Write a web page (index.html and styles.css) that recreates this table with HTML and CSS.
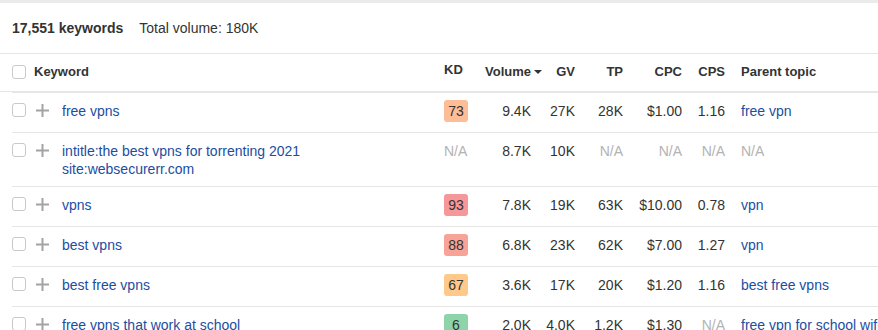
FILE: index.html
```html
<!DOCTYPE html>
<html lang="en">
<head>
<meta charset="utf-8">
<title>Keywords</title>
<link rel="stylesheet" href="styles.css">
</head>
<body>
<div class="topbar"></div>
<div class="summary">
  <span class="count">17,551 keywords</span>
  <span class="total">Total volume: 180K</span>
</div>
<div class="table">
  <div class="row head">
    <div class="kw"><span class="cb"></span><span class="hlabel">Keyword</span></div>
    <div class="kd">KD</div>
    <div class="num sort">Volume<span class="arrow"></span></div>
    <div class="num">GV</div>
    <div class="num">TP</div>
    <div class="num">CPC</div>
    <div class="num">CPS</div>
    <div class="parent">Parent topic</div>
  </div>

  <div class="row">
    <div class="kw"><span class="cb"></span><svg class="plus" viewBox="0 0 13 13"><rect x="0" y="5.5" width="13" height="2"/><rect x="5.5" y="0" width="2" height="13"/></svg><a class="kwtext">free vpns</a></div>
    <div class="kd"><span class="badge kd73">73</span></div>
    <div class="num">9.4K</div>
    <div class="num">27K</div>
    <div class="num">28K</div>
    <div class="num">$1.00</div>
    <div class="num">1.16</div>
    <div class="parent"><a>free vpn</a></div>
  </div>

  <div class="row">
    <div class="kw"><span class="cb"></span><svg class="plus" viewBox="0 0 13 13"><rect x="0" y="5.5" width="13" height="2"/><rect x="5.5" y="0" width="2" height="13"/></svg><a class="kwtext">intitle:the best vpns for torrenting 2021 site:websecurerr.com</a></div>
    <div class="kd na">N/A</div>
    <div class="num">8.7K</div>
    <div class="num">10K</div>
    <div class="num na">N/A</div>
    <div class="num na">N/A</div>
    <div class="num na">N/A</div>
    <div class="parent na">N/A</div>
  </div>

  <div class="row">
    <div class="kw"><span class="cb"></span><svg class="plus" viewBox="0 0 13 13"><rect x="0" y="5.5" width="13" height="2"/><rect x="5.5" y="0" width="2" height="13"/></svg><a class="kwtext">vpns</a></div>
    <div class="kd"><span class="badge kd93">93</span></div>
    <div class="num">7.8K</div>
    <div class="num">19K</div>
    <div class="num">63K</div>
    <div class="num">$10.00</div>
    <div class="num">0.78</div>
    <div class="parent"><a>vpn</a></div>
  </div>

  <div class="row">
    <div class="kw"><span class="cb"></span><svg class="plus" viewBox="0 0 13 13"><rect x="0" y="5.5" width="13" height="2"/><rect x="5.5" y="0" width="2" height="13"/></svg><a class="kwtext">best vpns</a></div>
    <div class="kd"><span class="badge kd88">88</span></div>
    <div class="num">6.8K</div>
    <div class="num">23K</div>
    <div class="num">62K</div>
    <div class="num">$7.00</div>
    <div class="num">1.27</div>
    <div class="parent"><a>vpn</a></div>
  </div>

  <div class="row">
    <div class="kw"><span class="cb"></span><svg class="plus" viewBox="0 0 13 13"><rect x="0" y="5.5" width="13" height="2"/><rect x="5.5" y="0" width="2" height="13"/></svg><a class="kwtext">best free vpns</a></div>
    <div class="kd"><span class="badge kd67">67</span></div>
    <div class="num">3.6K</div>
    <div class="num">17K</div>
    <div class="num">20K</div>
    <div class="num">$1.20</div>
    <div class="num">1.16</div>
    <div class="parent"><a>best free vpns</a></div>
  </div>

  <div class="row">
    <div class="kw"><span class="cb"></span><svg class="plus" viewBox="0 0 13 13"><rect x="0" y="5.5" width="13" height="2"/><rect x="5.5" y="0" width="2" height="13"/></svg><a class="kwtext">free vpns that work at school</a></div>
    <div class="kd"><span class="badge kd6">6</span></div>
    <div class="num">2.0K</div>
    <div class="num">4.0K</div>
    <div class="num">1.2K</div>
    <div class="num">$1.30</div>
    <div class="num na">N/A</div>
    <div class="parent"><a>free vpn for school wifi</a></div>
  </div>
</div>
</body>
</html>
```

FILE: styles.css
```css
html, body {
  margin: 0;
  padding: 0;
  overflow: hidden;
  background: #fff;
}
body {
  width: 878px;
  font-family: "Liberation Sans", Arial, sans-serif;
  font-size: 14px;
  line-height: 18px;
  color: #333;
}
.topbar {
  height: 3px;
  background: #ebebeb;
}
.summary {
  display: flex;
  gap: 16px;
  padding: 16px 12px;
  border-bottom: 1px solid #e6e6e6;
}
.count {
  font-weight: bold;
}
.row {
  display: grid;
  grid-template-columns: 432px 26px 61px 44px 48px 59px 43px 1fr;
  align-items: start;
  border-top: 1px solid #e6e6e6;
  margin-left: 12px;
  padding-bottom: 8px;
  white-space: nowrap;
}
.row > div {
  padding-top: 9px;
}
.row.head {
  border-top: none;
  margin-left: 0;
  padding-left: 12px;
  padding-bottom: 10px;
  font-size: 13px;
  font-weight: bold;
  border-bottom: 1px solid #e6e6e6;
}
.row.head > div {
  padding-top: 9px;
}
.kw {
  display: flex;
  align-items: flex-start;
}
.cb {
  flex: none;
  width: 12px;
  height: 12px;
  border: 1px solid #c9c9c9;
  border-radius: 3px;
  background: #fff;
  margin-top: 1px;
}
.head .cb {
  margin-top: 2px;
  margin-right: 8px;
}
.plus {
  flex: none;
  width: 13px;
  height: 13px;
  margin: 2px 13px 0 10px;
  fill: #a3a3a3;
}
.kwtext {
  white-space: normal;
  max-width: 300px;
  color: #1c4da1;
}
a {
  color: #1c4da1;
  text-decoration: none;
}
.num {
  text-align: right;
}
.parent {
  padding-left: 16px;
}
.na {
  color: #b3b3b3;
}
.sort {
  position: relative;
}
.arrow {
  position: absolute;
  right: -11px;
  top: 16px;
  width: 0;
  height: 0;
  border-left: 4px solid transparent;
  border-right: 4px solid transparent;
  border-top: 4px solid #333;
}
.row > .kd:not(.na) {
  padding-top: 7px;
}
.badge {
  display: block;
  width: 24px;
  height: 22px;
  line-height: 22px;
  text-align: center;
  border-radius: 3px;
  margin-bottom: 2px;
  color: #333;
}
.kd73 { background: #fdbd96; }
.kd93 { background: #f69799; }
.kd88 { background: #f8a398; }
.kd67 { background: #fec98a; }
.kd6 { background: #8ed3aa; }
```
